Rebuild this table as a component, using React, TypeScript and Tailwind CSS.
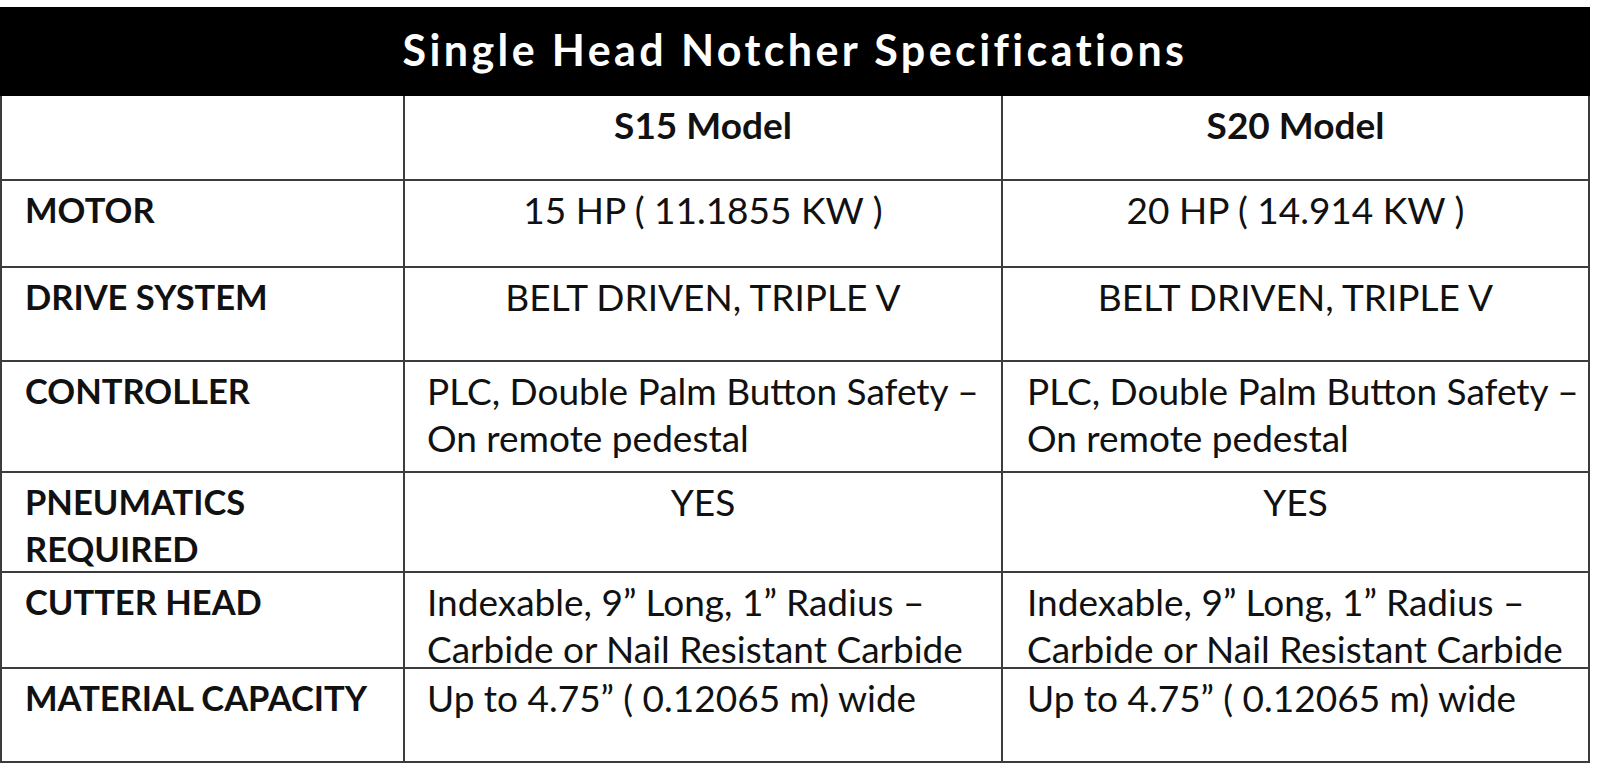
const rows = [
  { label: ["MOTOR"], s15: ["15 HP ( 11.1855 KW )"], s20: ["20 HP ( 14.914 KW )"], center: true, h: "h-[87px]" },
  { label: ["DRIVE SYSTEM"], s15: ["BELT DRIVEN, TRIPLE V"], s20: ["BELT DRIVEN, TRIPLE V"], center: true, h: "h-[94px]" },
  {
    label: ["CONTROLLER"],
    s15: ["PLC, Double Palm Button Safety –", "On remote pedestal"],
    s20: ["PLC, Double Palm Button Safety –", "On remote pedestal"],
    center: false,
    h: "h-[111px]",
  },
  { label: ["PNEUMATICS", "REQUIRED"], s15: ["YES"], s20: ["YES"], center: true, h: "h-[100px]" },
  {
    label: ["CUTTER HEAD"],
    s15: ["Indexable, 9” Long, 1” Radius –", "Carbide or Nail Resistant Carbide"],
    s20: ["Indexable, 9” Long, 1” Radius –", "Carbide or Nail Resistant Carbide"],
    center: false,
    h: "h-[96px]",
  },
  {
    label: ["MATERIAL CAPACITY"],
    s15: ["Up to 4.75” ( 0.12065 m) wide"],
    s20: ["Up to 4.75” ( 0.12065 m) wide"],
    center: false,
    h: "h-[94px]",
  },
];

const Lines = ({ lines }: { lines: string[] }) => (
  <>
    {lines.map((l, i) => (
      <div key={i} className="whitespace-nowrap">
        {l}
      </div>
    ))}
  </>
);

export default function App() {
  return (
    <div className="min-h-[774px] bg-white pt-[7px] text-[#111] font-['Lato','Liberation_Sans',sans-serif]">
      <div className="w-[1590px]">
        {/* title bar */}
        <div className="flex h-[89px] items-center justify-center bg-black pb-[2px] text-[43px] font-bold tracking-[3.4px] text-white">
          Single Head Notcher Specifications
        </div>

        <div className="border-x-2 border-[#3c3c3c]">
          {/* model row */}
          <div className="grid h-[85px] grid-cols-[403px_598px_585px] border-b-2 border-[#3c3c3c] text-[37px] leading-[47px]">
            <div className="border-r-2 border-[#3c3c3c]" />
            <div className="border-r-2 border-[#3c3c3c] pt-[5px] text-center font-bold">S15 Model</div>
            <div className="pt-[5px] text-center font-bold">S20 Model</div>
          </div>

          {rows.map((r, idx) => (
            <div
              key={idx}
              className={`grid ${r.h} grid-cols-[403px_598px_585px] border-b-2 border-[#3c3c3c] text-[37px] leading-[47px]`}
            >
              <div className="border-r-2 border-[#3c3c3c] pl-[23px] pt-[5px] text-[34.5px] font-bold">
                <Lines lines={r.label} />
              </div>
              <div
                className={`border-r-2 border-[#3c3c3c] pt-[5px] ${r.center ? "text-center" : "pl-[22px]"}`}
              >
                <Lines lines={r.s15} />
              </div>
              <div className={`pt-[5px] ${r.center ? "text-center" : "pl-[24px]"}`}>
                <Lines lines={r.s20} />
              </div>
            </div>
          ))}
        </div>
      </div>
    </div>
  );
}
